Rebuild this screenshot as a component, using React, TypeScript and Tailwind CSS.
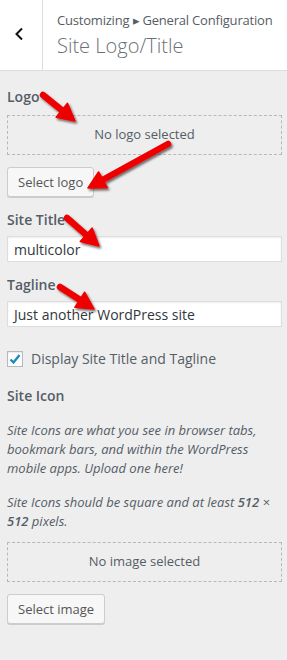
import React from 'react'

type ArrowProps = {
  x1: number
  y1: number
  x2: number
  y2: number
}

// red annotation arrow drawn over the panel
function Arrow({ x1, y1, x2, y2 }: ArrowProps) {
  const dx = x2 - x1
  const dy = y2 - y1
  const len = Math.sqrt(dx * dx + dy * dy)
  const ux = dx / len
  const uy = dy / len
  const head = 17
  const half = 9
  const bx = x2 - ux * head
  const by = y2 - uy * head
  const p1 = `${bx - uy * half},${by + ux * half}`
  const p2 = `${bx + uy * half},${by - ux * half}`
  return (
    <g filter="url(#shadow)">
      <line x1={x1} y1={y1} x2={bx + ux * 2} y2={by + uy * 2} stroke="#ee0000" strokeWidth={6.5} strokeLinecap="round" />
      <polygon points={`${x2},${y2} ${p1} ${p2}`} fill="#ee0000" stroke="#ee0000" strokeWidth={1.5} strokeLinejoin="round" />
    </g>
  )
}

function Label({ children }: { children: React.ReactNode }) {
  return <div className="text-[14px] leading-[20px] font-semibold text-[#555d66]">{children}</div>
}

function DropZone({ text }: { text: string }) {
  return (
    <div className="flex h-[40px] w-[275px] items-center justify-center border border-dashed border-[#b4b9be] text-[13px] text-[#555d66]">
      {text}
    </div>
  )
}

function WpButton({ text }: { text: string }) {
  return (
    <button
      type="button"
      className="h-[30px] rounded-[3px] border border-[#cccccc] bg-[#f7f7f7] px-[10px] text-[13px] leading-[28px] text-[#555555] shadow-[0_1px_0_#cccccc]"
    >
      {text}
    </button>
  )
}

function TextInput({ value }: { value: string }) {
  return (
    <div className="flex h-[26px] w-[275px] items-center border border-[#dddddd] bg-white px-[6px] text-[14px] text-[#32373c] shadow-[inset_0_1px_2px_rgba(0,0,0,0.07)]">
      {value}
    </div>
  )
}

export default function App() {
  return (
    <div className="relative h-[660px] w-[287px] overflow-hidden bg-[#eeeeee] font-['Open_Sans','Noto_Sans',sans-serif]">
      <div className="flex h-[71px] border-b border-[#dddddd] bg-white">
        <div className="flex w-[43px] shrink-0 items-center border-r border-[#dddddd] pl-[14px] pb-[3px]">
          <svg width="10" height="14" viewBox="0 0 10 14">
            <path d="M8 1.5 L2.5 7 L8 12.5" fill="none" stroke="#111111" strokeWidth="2" />
          </svg>
        </div>
        <div className="pl-[14px] pt-[11px]">
          <div className="text-[13px] leading-[18px] tracking-[-0.2px] text-[#555d66]">Customizing ▸ General Configuration</div>
          <div className="mt-[5px] text-[20px] leading-[24px] font-extralight text-[#6b7177]">Site Logo/Title</div>
        </div>
      </div>

      <div className="px-[7px] pt-[16px]">
        <Label>Logo</Label>
        <div className="mt-[8px]">
          <DropZone text="No logo selected" />
        </div>
        <div className="mt-[12px]">
          <WpButton text="Select logo" />
        </div>

        <div className="mt-[13px]">
          <Label>Site Title</Label>
        </div>
        <div className="mt-[6px]">
          <TextInput value="multicolor" />
        </div>

        <div className="mt-[13px]">
          <Label>Tagline</Label>
        </div>
        <div className="mt-[6px]">
          <TextInput value="Just another WordPress site" />
        </div>

        <div className="mt-[21px] flex items-center gap-[8px]">
          <div className="flex h-[16px] w-[16px] items-center justify-center border border-[#b4b9be] bg-white shadow-[inset_0_1px_2px_rgba(0,0,0,0.1)]">
            <svg width="14" height="14" viewBox="0 0 14 14">
              <path d="M2.5 7.5 L5.5 10.5 L11.5 3" fill="none" stroke="#1e8cbe" strokeWidth="2.4" />
            </svg>
          </div>
          <span className="text-[14px] text-[#555d66]">Display Site Title and Tagline</span>
        </div>

        <div className="mt-[17px]">
          <Label>Site Icon</Label>
        </div>
        <p className="mt-[15px] whitespace-nowrap text-[13px] leading-[19px] italic text-[#555d66]">
          Site Icons are what you see in browser tabs,
          <br />
          bookmark bars, and within the WordPress
          <br />
          mobile apps. Upload one here!
        </p>
        <p className="mt-[15px] whitespace-nowrap text-[13px] leading-[19px] italic text-[#555d66]">
          Site Icons should be square and at least <strong className="font-semibold">512</strong> ×
          <br />
          <strong className="font-semibold">512</strong> pixels.
        </p>
        <div className="mt-[11px]">
          <DropZone text="No image selected" />
        </div>
        <div className="mt-[12px]">
          <WpButton text="Select image" />
        </div>
      </div>

      <svg className="pointer-events-none absolute inset-0" width="287" height="660">
        <defs>
          <filter id="shadow" x="-30%" y="-30%" width="160%" height="160%">
            <feDropShadow dx="1.5" dy="2" stdDeviation="1.2" floodColor="#000" floodOpacity="0.55" />
          </filter>
        </defs>
        <Arrow x1={43} y1={95} x2={75} y2={121} />
        <Arrow x1={168} y1={144} x2={88} y2={188} />
        <Arrow x1={67} y1={218} x2={99} y2={246} />
        <Arrow x1={60} y1={287} x2={94} y2={309} />
      </svg>
    </div>
  )
}
